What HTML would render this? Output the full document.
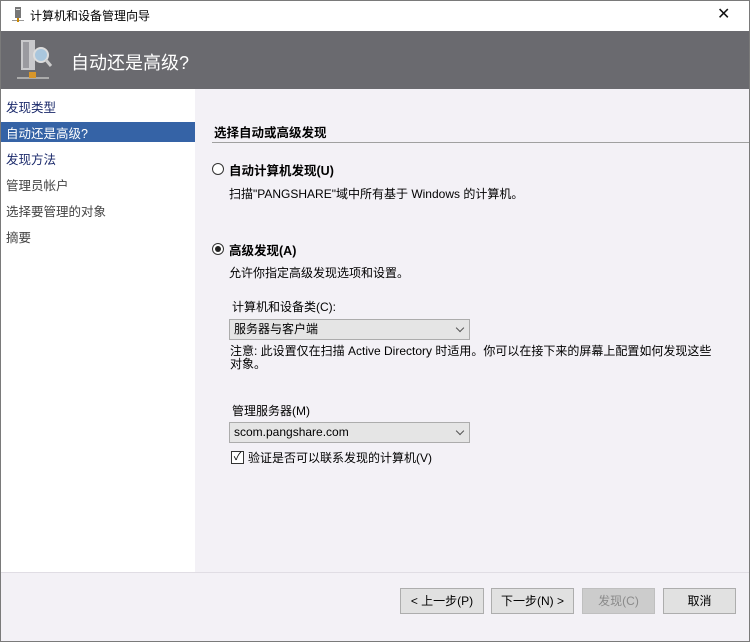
<!DOCTYPE html><html><head><meta charset="utf-8"><style>
*{margin:0;padding:0;box-sizing:border-box}
body{width:750px;height:642px;position:relative;overflow:hidden;background:#f3f1f6;font-family:"Liberation Sans","Noto Sans CJK SC",sans-serif;font-size:12px;color:#000}
.a{position:absolute;white-space:nowrap}
.win{position:absolute;left:0;top:0;width:750px;height:642px;border:1px solid #7a7a7a;pointer-events:none}
.btn{position:absolute;top:588px;height:26px;border:1px solid #adadad;background:#e1e1e1;text-align:center;line-height:24px;font-size:12px}
.sel{position:absolute;left:229px;width:241px;height:21px;border:1px solid #acacac;background:#e5e5e5;padding-left:4px;line-height:19px}
.sel::after{content:"";position:absolute;right:6px;top:5px;width:5px;height:5px;border-right:1px solid #555;border-bottom:1px solid #555;transform:rotate(45deg)}
</style></head><body>
<div class="a" style="left:0;top:0;width:750px;height:31px;background:#fff"></div>
<svg class="a" style="left:12px;top:7px" width="12" height="16"><rect x="3" y="0" width="6" height="11" fill="#777"/><rect x="4" y="2" width="4" height="1" fill="#ddd"/><rect x="0" y="13" width="12" height="1" fill="#999"/><rect x="5" y="11" width="2" height="4" fill="#c80"/></svg>
<div class="a" style="left:30px;top:7px;font-size:12px">计算机和设备管理向导</div>
<div class="a" style="left:717px;top:4px;font-size:16px;color:#111">✕</div>
<div class="a" style="left:0;top:31px;width:750px;height:58px;background:#6a6a6f"></div>
<svg class="a" style="left:17px;top:38px" width="38" height="44"><rect x="4" y="2" width="14" height="30" fill="#c9c9cc"/><rect x="6" y="4" width="6" height="26" fill="#9a9aa0"/><circle cx="24" cy="17" r="7" fill="#a9c6dd" stroke="#ddd" stroke-width="2"/><line x1="29" y1="22" x2="34" y2="28" stroke="#ccc" stroke-width="3"/><rect x="0" y="39" width="32" height="2" fill="#aaa"/><rect x="12" y="34" width="7" height="6" fill="#d8962a"/></svg>
<div class="a" style="left:71px;top:49px;font-size:18px;color:#fff">自动还是高级?</div>
<div class="a" style="left:0;top:89px;width:195px;height:483px;background:#fff"></div>
<div class="a" style="left:6px;top:97px;font-size:12.5px;color:#1b2a6b">发现类型</div>
<div class="a" style="left:0;top:122px;width:195px;height:20px;background:#3563a6"></div>
<div class="a" style="left:6px;top:123px;font-size:12.5px;color:#fff">自动还是高级?</div>
<div class="a" style="left:6px;top:149px;font-size:12.5px;color:#1b2a6b">发现方法</div>
<div class="a" style="left:6px;top:175px;font-size:12.5px;color:#444">管理员帐户</div>
<div class="a" style="left:6px;top:201px;font-size:12.5px;color:#444">选择要管理的对象</div>
<div class="a" style="left:6px;top:227px;font-size:12.5px;color:#444">摘要</div>
<div class="a" style="left:214px;top:122px;font-weight:bold;font-size:12.5px">选择自动或高级发现</div>
<div class="a" style="left:212px;top:142px;width:538px;height:1px;background:#a0a0a0"></div>
<div class="a" style="left:212px;top:163px;width:12px;height:12px;border:1px solid #333;border-radius:50%;background:#fff"></div>
<div class="a" style="left:229px;top:160px;font-weight:bold;font-size:12.5px">自动计算机发现(U)</div>
<div class="a" style="left:229px;top:185px">扫描"PANGSHARE"域中所有基于 Windows 的计算机。</div>
<div class="a" style="left:212px;top:243px;width:12px;height:12px;border:1px solid #333;border-radius:50%;background:#fff"><div style="position:absolute;left:2px;top:2px;width:6px;height:6px;border-radius:50%;background:#222"></div></div>
<div class="a" style="left:229px;top:240px;font-weight:bold;font-size:12.5px">高级发现(A)</div>
<div class="a" style="left:229px;top:264px">允许你指定高级发现选项和设置。</div>
<div class="a" style="left:232px;top:298px">计算机和设备类(C):</div>
<div class="sel" style="top:319px">服务器与客户端</div>
<div class="a" style="left:230px;top:345px;line-height:13px">注意: 此设置仅在扫描 Active Directory 时适用。你可以在接下来的屏幕上配置如何发现这些<br>对象。</div>
<div class="a" style="left:232px;top:402px">管理服务器(M)</div>
<div class="sel" style="top:422px">scom.pangshare.com</div>
<div class="a" style="left:231px;top:451px;width:13px;height:13px;border:1px solid #333;background:#fff;font-size:11px;line-height:11px;text-align:center">✓</div>
<div class="a" style="left:248px;top:449px">验证是否可以联系发现的计算机(V)</div>
<div class="a" style="left:0;top:572px;width:750px;height:1px;background:#e0dde4"></div>
<div class="btn" style="left:400px;width:84px">&lt; 上一步(P)</div>
<div class="btn" style="left:491px;width:83px">下一步(N) &gt;</div>
<div class="btn" style="left:582px;width:73px;background:#cccccc;border-color:#bfbfbf;color:#8a8a8a">发现(C)</div>
<div class="btn" style="left:663px;width:73px">取消</div>
<div class="win"></div>
</body></html>
